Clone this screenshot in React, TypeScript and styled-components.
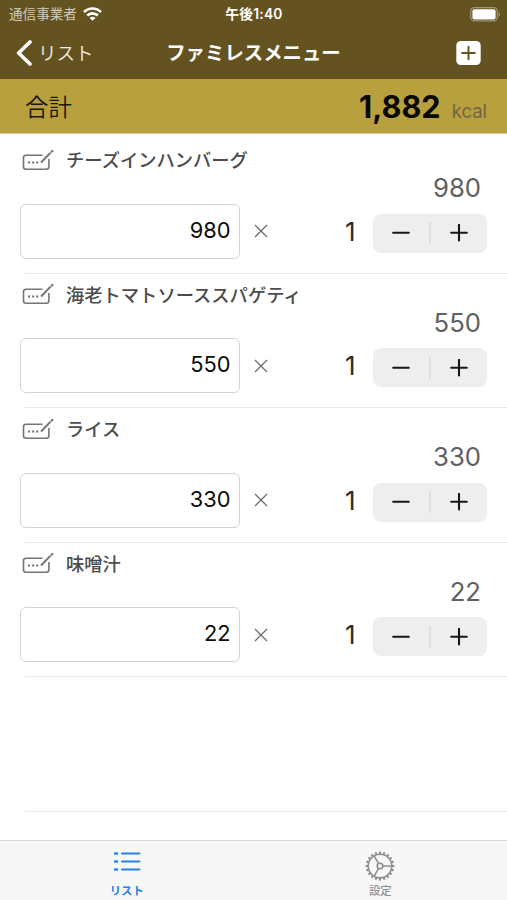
import React from 'react';
import styled, { createGlobalStyle } from 'styled-components';

const GlobalStyle = createGlobalStyle`
  * { box-sizing: border-box; }
  body { margin: 0; background: #fff; font-family: Inter, "Noto Sans CJK JP", sans-serif; }
`;

const Screen = styled.div`
  width: 507px;
  height: 900px;
  display: flex;
  flex-direction: column;
  overflow: hidden;
  background: #fff;
`;

const StatusBar = styled.div`
  height: 28px;
  flex: none;
  display: grid;
  grid-template-columns: 1fr auto 1fr;
  align-items: center;
  padding: 0 6px 0 7px;
  background: #645320;
  color: #fff;
`;

const Carrier = styled.div`
  display: flex;
  align-items: center;
  gap: 6px;
  padding-left: 2px;
  font-size: 13.6px;
  line-height: 20px;
  color: #d0cbbc;
`;

const Clock = styled.div`
  font-size: 13.8px;
  font-weight: 600;
  line-height: 20px;
  letter-spacing: 0.2px;
`;

const BatterySlot = styled.div`
  display: flex;
  justify-content: flex-end;
`;

const NavBar = styled.header`
  height: 51px;
  flex: none;
  display: grid;
  grid-template-columns: 1fr auto 1fr;
  align-items: center;
  padding: 0 16px 2px;
  background: #645320;
  color: #fff;
`;

const BackButton = styled.div`
  display: flex;
  align-items: center;
  gap: 6px;
  font-size: 18.5px;
  font-weight: 350;
  line-height: 26px;
  color: #f3eee4;
`;

const Title = styled.div`
  font-size: 19.4px;
  font-weight: 700;
  line-height: 26px;
`;

const AddButton = styled.div`
  display: flex;
  justify-content: flex-end;
  padding-right: 10px;
`;

const TotalBar = styled.div`
  height: 55px;
  flex: none;
  display: flex;
  align-items: center;
  padding: 0 20px 0 25px;
  background: #b9a03f;
  border-bottom: 1px solid #d8c891;
  line-height: 39px;
`;

const TotalLabel = styled.span`
  flex: 1;
  padding-top: 2px;
  font-size: 23.4px;
  font-weight: 350;
  color: #1b1705;
`;

const TotalFigure = styled.div`
  display: flex;
  align-items: baseline;
  padding-top: 5px;
`;

const TotalValue = styled.span`
  font-size: 30.6px;
  font-weight: 700;
  color: #080700;
`;

const Unit = styled.span`
  margin-left: 11px;
  font-size: 18.5px;
  color: #71673f;
`;

const List = styled.main`
  flex: 1;
  padding-top: 5px;
`;

const Row = styled.section`
  height: 134.5px;
  position: relative;
  padding: 9px 20px 0 20px;
  &::after {
    content: '';
    position: absolute;
    left: 25px;
    right: 0;
    bottom: 0;
    height: 1px;
    background: #e7e7e8;
  }
`;

const NameLine = styled.div`
  height: 25px;
  display: flex;
  align-items: center;
  gap: 12px;
  padding-left: 2px;
  font-size: 18.3px;
  font-weight: 500;
  line-height: 25px;
  color: #4c4c4c;
`;

const Subtotal = styled.div`
  height: 30.5px;
  padding-right: 6px;
  text-align: right;
  font-size: 25.7px;
  line-height: 30.5px;
  color: #606063;
`;

const Entry = styled.div`
  height: 55px;
  display: flex;
  align-items: center;
`;

const Amount = styled.div`
  width: 219.5px;
  height: 55px;
  border: 1.5px solid #d3d3d3;
  border-radius: 6px;
  padding-right: 8px;
  text-align: right;
  font-size: 21.8px;
  line-height: 51.5px;
  color: #0c0c0c;
`;

const Times = styled.svg`
  margin-left: 14px;
  flex: none;
`;

const Count = styled.div`
  flex: 1;
  padding: 1px 17px 0 0;
  text-align: right;
  font-size: 26px;
  line-height: 38px;
  color: #2b2b2b;
`;

const Stepper = styled.div`
  width: 114.5px;
  height: 39px;
  margin-top: 4px;
  display: flex;
  align-items: center;
  border-radius: 8px;
  background: #eeeeee;
`;

const StepButton = styled.div`
  flex: 1;
  display: flex;
  justify-content: center;
`;

const StepDivider = styled.div`
  width: 1.5px;
  height: 22px;
  background: #dfdfe0;
`;

const TabBar = styled.nav`
  height: 60px;
  flex: none;
  display: grid;
  grid-template-columns: 1fr 1fr;
  border-top: 1px solid #d9d9d9;
  background: #f7f7f8;
`;

const Tab = styled.div<{ $active?: boolean }>`
  display: flex;
  flex-direction: column;
  align-items: center;
  padding-top: 10px;
  font-size: 11.3px;
  font-weight: ${p => (p.$active ? 700 : 500)};
  line-height: 16px;
  color: ${p => (p.$active ? '#2481ee' : '#8f8f90')};
`;

const TabIcon = styled.div`
  height: 32px;
`;

const WifiIcon = () => (
  <svg width="19" height="14" viewBox="0 0 19 14" fill="none" stroke="#fff" strokeWidth="2.7">
    <path d="M1 5.1C5.8.3 13.2.3 18 5.1" />
    <path d="M4.2 8.5c3-2.9 7.6-2.9 10.6 0" />
    <path d="M9.5 13.8 6.5 10.9c1.7-1.4 4.3-1.4 6 0z" fill="#fff" stroke="none" />
  </svg>
);

const BatteryIcon = () => (
  <svg width="31" height="15" viewBox="0 0 31 15">
    <rect x=".7" y=".7" width="26.6" height="13.2" rx="3.6" fill="none" stroke="#a0966f" strokeWidth="1.2" />
    <rect x="2.4" y="2.2" width="23.2" height="10.2" rx="2" fill="#fff" />
    <path d="M28.6 4.9c1.8.8 1.8 4 0 4.8z" fill="#a0966f" />
  </svg>
);

const EditIcon = () => (
  <svg width="32" height="22" viewBox="0 0 32 22" fill="none" stroke="#747474" strokeWidth="1.6">
    <path d="M20.5 5.2H4.1c-1.6 0-2.6.9-2.6 2.4v9.2c0 1.5 1 2.4 2.6 2.4h20.2c1.6 0 2.6-.9 2.6-2.4V9" />
    <path d="m19 12.5 9.6-9.9" strokeWidth="2" />
    <path d="m29 2.2 2.1-2" strokeWidth="2" />
    <path d="M6 12.5h2.1M10.1 12.5h2.1M14.2 12.5h2.1" strokeWidth="2" />
  </svg>
);

const PlusGlyph = () => (
  <svg width="18" height="18" viewBox="0 0 18 18" stroke="#171717" strokeWidth="2.1" strokeLinecap="round">
    <path d="M1.2 8.7h15.6M9 .9v15.6" />
  </svg>
);

const MinusGlyph = () => (
  <svg width="18" height="18" viewBox="0 0 18 18" stroke="#171717" strokeWidth="2.1" strokeLinecap="round">
    <path d="M1.2 8.7h15.6" />
  </svg>
);

const ListIcon = () => (
  <svg width="28" height="22" viewBox="0 0 28 22" stroke="#2481ee" strokeLinecap="round">
    <path d="M9 2.5h17.4M9 10.5h17.4M9 18.5h17.4" strokeWidth="2.1" />
    <path d="M2.2 2.5h1.8M2.2 10.5h1.8M2.2 18.5h1.8" strokeWidth="2.7" />
  </svg>
);

const teeth = Array.from({ length: 20 }, (_, i) => i * 18);

const GearIcon = () => (
  <svg width="30" height="30" viewBox="-15 -15 30 30" fill="none" stroke="#8f8f90" strokeWidth="1.6">
    <circle r="11.8" />
    <circle r="2.8" />
    <path d="M2.8 0H11.8M-1.4-2.4-5.9-10.2M-1.4 2.4-5.9 10.2" />
    {teeth.map(a => (
      <path key={a} d="M12 0h2.4" strokeWidth="2" transform={`rotate(${a})`} />
    ))}
  </svg>
);

const items = [
  { name: 'チーズインハンバーグ', kcal: 980, count: 1 },
  { name: '海老トマトソーススパゲティ', kcal: 550, count: 1 },
  { name: 'ライス', kcal: 330, count: 1 },
  { name: '味噌汁', kcal: 22, count: 1 },
];

export default function App() {
  const total = items.reduce((sum, i) => sum + i.kcal * i.count, 0);
  return (
    <Screen>
      <GlobalStyle />
      <StatusBar>
        <Carrier>
          通信事業者
          <WifiIcon />
        </Carrier>
        <Clock>午後1:40</Clock>
        <BatterySlot>
          <BatteryIcon />
        </BatterySlot>
      </StatusBar>
      <NavBar>
        <BackButton>
          <svg width="16" height="26" viewBox="0 0 16 26" fill="none" stroke="#fff" strokeWidth="3.6" strokeLinecap="round" strokeLinejoin="round">
            <path d="M14 2 2.6 13 14 24" />
          </svg>
          リスト
        </BackButton>
        <Title>ファミレスメニュー</Title>
        <AddButton>
          <svg width="25" height="24" viewBox="0 0 25 24">
            <rect x=".3" width="24.4" height="24" rx="4.5" fill="#fff" />
            <path d="M6.2 12h12.6M12.5 5.7v12.6" stroke="#645320" strokeWidth="1.9" strokeLinecap="round" />
          </svg>
        </AddButton>
      </NavBar>
      <TotalBar>
        <TotalLabel>合計</TotalLabel>
        <TotalFigure>
          <TotalValue>{total.toLocaleString('en-US')}</TotalValue>
          <Unit>kcal</Unit>
        </TotalFigure>
      </TotalBar>
      <List>
        {items.map(item => (
          <Row key={item.name}>
            <NameLine>
              <EditIcon />
              {item.name}
            </NameLine>
            <Subtotal>{item.kcal * item.count}</Subtotal>
            <Entry>
              <Amount>{item.kcal}</Amount>
              <Times width="14" height="14" viewBox="0 0 14 14" stroke="#686868" strokeWidth="1.2">
                <path d="m1 1 12 12M13 1 1 13" />
              </Times>
              <Count>{item.count}</Count>
              <Stepper>
                <StepButton>
                  <MinusGlyph />
                </StepButton>
                <StepDivider />
                <StepButton>
                  <PlusGlyph />
                </StepButton>
              </Stepper>
            </Entry>
          </Row>
        ))}
        <Row />
      </List>
      <TabBar>
        <Tab $active>
          <TabIcon>
            <ListIcon />
          </TabIcon>
          リスト
        </Tab>
        <Tab>
          <TabIcon>
            <GearIcon />
          </TabIcon>
          設定
        </Tab>
      </TabBar>
    </Screen>
  );
}
